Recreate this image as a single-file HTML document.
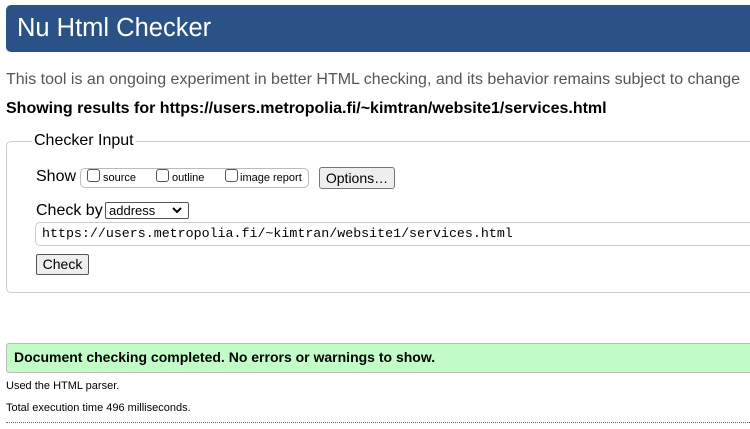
<!DOCTYPE html>
<html><head><style>
body{margin:0;width:750px;height:429px;overflow:hidden;background:#fff;font-family:"Liberation Sans",Arial,sans-serif;position:relative;color:#000}
.a{position:absolute;white-space:nowrap}
</style></head><body>
<div class="a" style="left:6px;top:5px;width:760px;height:47px;background:#2b5287;border-radius:5px"></div>
<div class="a" style="left:17px;top:13px;font-size:25.5px;color:#fff;line-height:30px">Nu Html Checker</div>
<div class="a" style="left:6px;top:70px;font-size:16px;color:#555;line-height:19px">This tool is an ongoing experiment in better HTML checking, and its behavior remains subject to change</div>
<div class="a" style="left:6px;top:99px;font-size:16px;font-weight:bold;line-height:19px">Showing results for https://users.metropolia.fi/~kimtran/website1/services.html</div>
<div class="a" style="left:6px;top:141px;width:770px;height:150px;border:1px solid #ccc;border-radius:5px"></div>
<div class="a" style="left:32px;top:131px;font-size:16px;background:#fff;padding:0 2px;line-height:19px">Checker Input</div>
<div class="a" style="left:36px;top:167px;font-size:16px;line-height:19px">Show</div>
<div class="a" style="left:80px;top:168px;width:227px;height:18px;border:1px solid #bbb;border-radius:5px"></div>
<div class="a" style="left:87px;top:169px;width:11px;height:11px;border:1px solid #555;border-radius:3px"></div>
<div class="a" style="left:103px;top:172px;font-size:11px">source</div>
<div class="a" style="left:156px;top:169px;width:11px;height:11px;border:1px solid #555;border-radius:3px"></div>
<div class="a" style="left:172px;top:172px;font-size:11px">outline</div>
<div class="a" style="left:225px;top:169px;width:11px;height:11px;border:1px solid #555;border-radius:3px"></div>
<div class="a" style="left:240px;top:172px;font-size:11px">image report</div>
<div class="a" style="left:319px;top:167px;width:74px;height:20px;border:1px solid #777;border-radius:3px;background:#eee;font-size:14px;text-align:center;line-height:20px">Options…</div>
<div class="a" style="left:36px;top:201px;font-size:16px;line-height:19px">Check by</div>
<div class="a" style="left:105px;top:202px;width:79px;height:15px;border:1px solid #555;border-radius:2px;font-size:13px;line-height:15px;padding-left:3px">address</div>
<svg class="a" style="left:172px;top:206px" width="10" height="8"><path d="M1 2 L5 6 L9 2" stroke="#000" stroke-width="2" fill="none"/></svg>
<div class="a" style="left:35px;top:222px;width:740px;height:22px;border:1px solid #ccc;border-radius:5px;font-family:'Liberation Mono',monospace;font-size:13.3px;line-height:22px;padding-left:6px">https://users.metropolia.fi/~kimtran/website1/services.html</div>
<div class="a" style="left:36px;top:254px;width:51px;height:19px;border:1px solid #555;border-radius:2px;background:#eee;font-size:14px;text-align:center;line-height:19px">Check</div>
<div class="a" style="left:6px;top:343px;width:770px;height:28px;background:#c2fdc8;border:1px solid #bbb;border-radius:3px"></div>
<div class="a" style="left:14px;top:349px;font-size:14px;font-weight:bold;line-height:17px">Document checking completed. No errors or warnings to show.</div>
<div class="a" style="left:6px;top:380px;font-size:11px;line-height:13px">Used the HTML parser.</div>
<div class="a" style="left:6px;top:402px;font-size:11px;line-height:13px">Total execution time 496 milliseconds.</div>
<div class="a" style="left:6px;top:422px;width:750px;border-top:1px dotted #666"></div>
</body></html>
